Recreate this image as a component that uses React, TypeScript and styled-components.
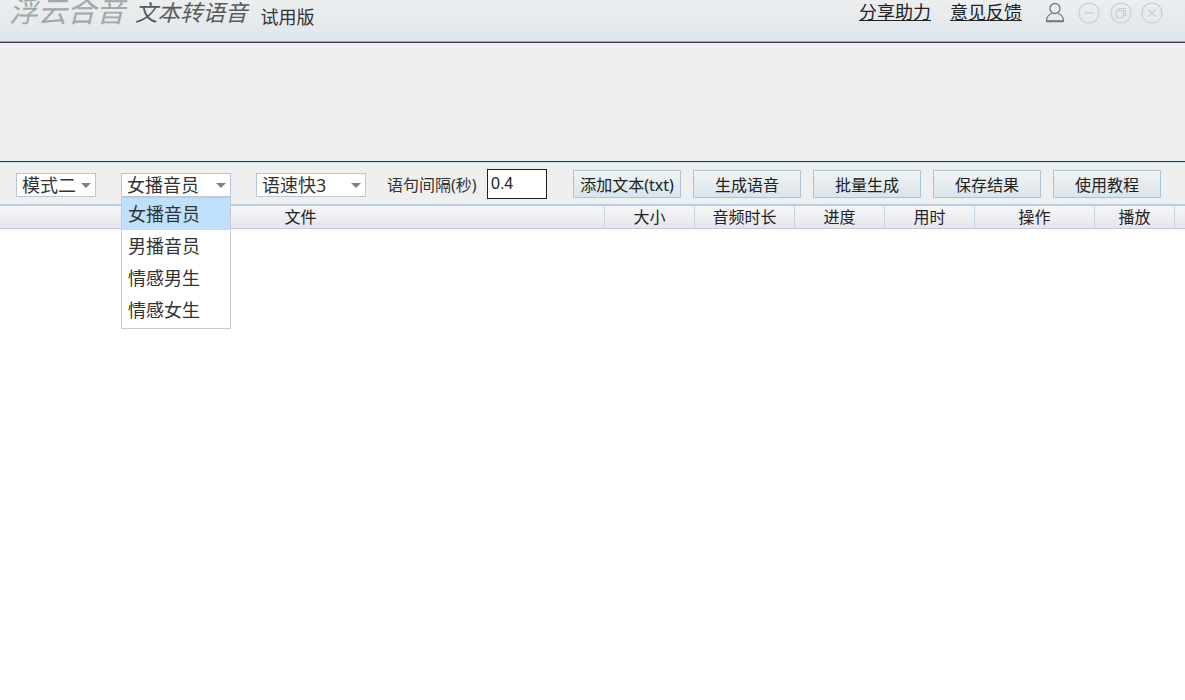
import React from "react";
import styled, { createGlobalStyle } from "styled-components";

const FONT = `"Noto Sans", "Noto Sans CJK SC", "Liberation Sans", sans-serif`;
const Global = createGlobalStyle`
  html, body { margin: 0; padding: 0; background: #fff; overflow: hidden; }
  body { font-family: ${FONT}; color: #222; }
`;
const Page = styled.div`width: 1185px; height: 700px; position: relative; background: #fff; overflow: hidden;`;
const TitleBar = styled.header`
  height: 42px; box-sizing: content-box; display: flex; align-items: flex-start; overflow: hidden;
  background: linear-gradient(#eceeef, #dfe6ed);
  border-bottom: 1px solid #3a3647; box-shadow: inset 0 -1px 0 #a5a5b0;
`;
const Brand = styled.div`display: flex; align-items: flex-start; padding-left: 9px; flex: 1;`;
const Logo = styled.span`font-size: 29px; line-height: 22px; font-style: italic; font-weight: 400; color: #a0a8a8; white-space: nowrap;`;
const Product = styled.span`font-size: 22.5px; line-height: 26px; font-style: italic; color: #5a5a5a; margin-left: 10px; white-space: nowrap;`;
const Edition = styled.span`font-size: 18px; line-height: 24px; color: #333; margin-left: 13px; margin-top: 5px; white-space: nowrap;`;
const LinkText = styled.a`font-size: 18px; line-height: 24px; color: #222; text-decoration: underline; margin-left: ${p => p.$gap}px; white-space: nowrap;`;
const Right = styled.div`display: flex; align-items: flex-start;`;
const IconSlot = styled.span`display: flex; margin-left: ${p => p.$gap}px; margin-right: ${p => p.$end || 0}px; margin-top: 2px;`;
const Blank = styled.section`height: 118px; background: #efefef; border-bottom: 1px solid #2f3557;`;
const Toolbar = styled.div`
  height: 41px; display: flex; align-items: center; background: #efefef;
  border-top: 1px solid #cfe3ee; padding-left: 16px; box-sizing: content-box;
`;
const Select = styled.div`
  width: ${p => p.$w}px; height: 24px; box-sizing: border-box; margin-right: ${p => p.$mr}px;
  border: 1px solid #b9c7d8; background: #fff; display: flex; align-items: center;
  justify-content: space-between; padding: 0 4px 0 5px; font-size: 18px; color: #333; line-height: 22px; margin-top: 3px;
`;
const Caret = styled.i`width: 0; height: 0; border-left: 5px solid transparent; border-right: 5px solid transparent; border-top: 5px solid #808080; margin-right: 0;`;
const Label = styled.span`font-size: 16px; color: #333; margin-right: 9px; white-space: nowrap; width: 91px;`;
const NumberBox = styled.input`
  width: 60px; height: 30px; box-sizing: border-box; border: 1px solid #222; padding: 0 3px;
  font: 16px "Liberation Sans", sans-serif; color: #222; background: #fff; margin-right: 26px; outline: none;
`;
const Btn = styled.button`
  width: 108px; height: 28px; box-sizing: border-box; padding: 0; margin-right: 12px;
  border: 1px solid #a8c4dc; background: linear-gradient(#f1f3f4, #dae5ea);
  box-shadow: inset 0 -1px 0 #cfeaf6; font: 16px ${FONT}; color: #222; white-space: nowrap;
`;
const Header = styled.div`
  height: 22px; display: flex; box-sizing: content-box;
  background: linear-gradient(#f6f6f8, #e5e6ec);
  border-top: 2px solid #b6cde3; border-bottom: 1px solid #c5ccd8;
`;
const Col = styled.div`
  width: ${p => p.$w}px; box-sizing: border-box; text-align: center; border-right: 1px solid #c5d3e2;
  padding-right: ${p => p.$pad || 0}px;
  font-size: 16px; line-height: 22px; color: #222; white-space: nowrap;
`;
const Menu = styled.ul`
  position: absolute; left: 121px; top: 197px; width: 110px; height: 132px; box-sizing: border-box; margin: 0; padding: 0;
  list-style: none; background: #fff; border: 1px solid #c5c8d6; border-top-color: #b6cde3;
`;
const Item = styled.li`
  height: 32px; line-height: 33px; padding-left: 6px; font-size: 18px; color: #333;
  background: ${p => (p.$active ? "#bfe0fb" : "transparent")};
`;

const UserIcon = () => (
  <svg width="20" height="22" viewBox="0 0 20 22" fill="none" stroke="#777" strokeWidth="1.3">
    <circle cx="10" cy="6.500" r="5" />
    <path d="M7 11.500c-3 1-5.500 3-5.500 7.500h17c0-4.500-2.500-6.500-5.500-7.500" />
    <path d="M1.500 19.500h17" strokeWidth="1.5" />
  </svg>
);
const WinIcon: React.FC<{ kind: string }> = ({ kind }) => (
  <svg width="22" height="22" viewBox="0 0 22 22" fill="none" stroke="#c3cfdc" strokeWidth="1.2">
    <circle cx="11" cy="11" r="10" />
    {kind === "min" && <path d="M6 11h10" />}
    {kind === "max" && <><rect x="6.500" y="8.500" width="7" height="7" /><path d="M8.500 8.500V6.500h7v7h-2" /></>}
    {kind === "close" && <path d="M7.500 7.500l7 7M14.500 7.500l-7 7" />}
  </svg>
);

const cols: [string, number, number][] = [["文件", 605, 3], ["大小", 90, 0], ["音频时长", 100, 0], ["进度", 90, 0], ["用时", 90, 0], ["操作", 120, 0], ["播放", 80, 0]];

export default function App() {
  return (
    <Page>
      <Global />
      <TitleBar>
        <Brand>
          <Logo>浮云合音</Logo>
          <Product>文本转语音</Product>
          <Edition>试用版</Edition>
        </Brand>
        <Right>
          <LinkText $gap={0}>分享助力</LinkText>
          <LinkText $gap={19}>意见反馈</LinkText>
          <IconSlot $gap={23}><UserIcon /></IconSlot>
          <IconSlot $gap={13}><WinIcon kind="min" /></IconSlot>
          <IconSlot $gap={10}><WinIcon kind="max" /></IconSlot>
          <IconSlot $gap={9} $end={22}><WinIcon kind="close" /></IconSlot>
        </Right>
      </TitleBar>
      <Blank />
      <Toolbar>
        <Select $w={80} $mr={25}>模式二<Caret /></Select>
        <Select $w={110} $mr={25}>女播音员<Caret /></Select>
        <Select $w={110} $mr={21}>语速快3<Caret /></Select>
        <Label>语句间隔(秒)</Label>
        <NumberBox defaultValue="0.4" />
        <Btn>添加文本(txt)</Btn>
        <Btn>生成语音</Btn>
        <Btn>批量生成</Btn>
        <Btn>保存结果</Btn>
        <Btn>使用教程</Btn>
      </Toolbar>
      <Header>
        {cols.map(([t, w, pad]) => <Col key={t} $w={w} $pad={pad}>{t}</Col>)}
      </Header>
      <Menu>
        <Item $active>女播音员</Item>
        <Item>男播音员</Item>
        <Item>情感男生</Item>
        <Item>情感女生</Item>
      </Menu>
    </Page>
  );
}
